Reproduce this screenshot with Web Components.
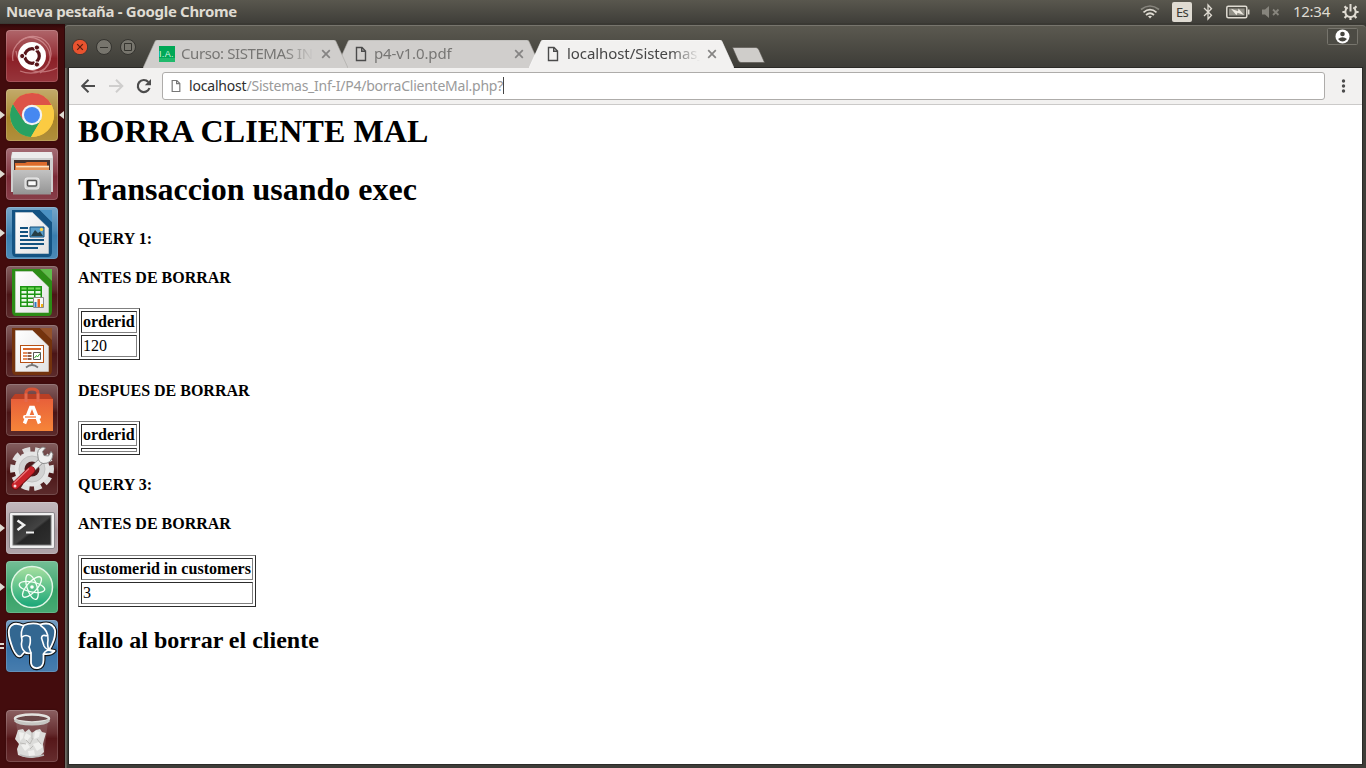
<!DOCTYPE html>
<html lang="es">
<head>
<meta charset="utf-8">
<title>Escritorio</title>
<style>
html,body{margin:0;height:100%;overflow:hidden;background:#430c0d}
</style>
</head>
<body>
<desk-top></desk-top>
<script>
const define = (name, html, setup) => customElements.define(name, class extends HTMLElement {
  connectedCallback() {
    if (this.shadowRoot) return;
    const t = document.createElement('template');
    t.innerHTML = typeof html === 'function' ? html(this) : html;
    this.attachShadow({mode: 'open'}).append(t.content.cloneNode(true));
    if (setup) setup(this);
  }
});

/* Text run tracked so that it fills a given width. */
define('fit-text', '<style>:host{display:inline-block;white-space:pre}span{display:inline-block}</style><span><slot></slot></span>', el => {
  const s = el.shadowRoot.querySelector('span');
  const n = el.textContent.length;
  const d = (+el.getAttribute('w') - s.getBoundingClientRect().width) / n;
  s.style.letterSpacing = d.toFixed(3) + 'px';
});

define('top-bar', `<style>
:host{display:flex;box-sizing:border-box;height:24px;align-items:center;padding:0 7px 0 6px;background:linear-gradient(#59574e,#3f3e39 95%,#37362f);color:#dfdbd2;font:15px/22px "Noto Sans",sans-serif}
.t{font-weight:700;flex:1;margin-top:-2px}
.l{width:20px;height:20px;border-radius:2px;background:#dfdbd2;color:#3c3b37;font-size:13px;line-height:21px;text-align:center;margin-left:12px}
.c{margin:-2px 0 0 13px}
svg{display:block;fill:none;stroke:#dfdbd2}
</style>
<fit-text class="t" w="231">Nueva pestaña - Google Chrome</fit-text>
<svg width="20" height="16" viewBox="0 0 20 16" stroke-width="1.7"><path d="M1 5.5Q10-1.5 19 5.5" stroke="#87857d"/><path d="M3.5 8.3Q10 3 16.5 8.3M6 11Q10 7.5 14 11"/><path d="M8 12.3Q10 11 12 12.3L10 14.6Z" fill="#dfdbd2" stroke="none"/></svg>
<div class="l"><fit-text w="12">Es</fit-text></div>
<svg style="margin-left:11px" width="10" height="18" viewBox="0 0 10 18" stroke-width="1.3"><path d="M1 5L8.5 12.3L5 16V2L8.5 5.7L1 13"/></svg>
<svg style="margin-left:13px" width="24" height="14" viewBox="0 0 24 14"><rect x=".8" y="1.3" width="20" height="11.4" rx="1.5" stroke-width="1.5"/><rect x="3" y="3.5" width="15.6" height="7" fill="#929087" stroke="none"/><path d="M22.7 4.5v5" stroke-width="1.6"/><path d="M5 3.7L12 6.3L12.5 3.5L18 10L11.500 7.700L10.500 10.200Z" fill="#eeeae1" stroke="none"/></svg>
<svg style="margin-left:12px" width="18" height="14" viewBox="0 0 18 14"><path d="M0 4.5H3L7 1V13L3 9.5H0Z" fill="#87857d" stroke="none"/><path d="M11 4.5L16.5 10M16.5 4.5L11 10" stroke="#87857d" stroke-width="1.8"/></svg>
<fit-text class="c" w="37">12:34</fit-text>
<svg style="margin-left:12px" width="17" height="18" viewBox="0 0 17 18"><path d="M5.7 4.5A5.2 5.2 0 1 0 11.3 4.5" stroke-width="2"/><path d="M8.5 1V8.5" stroke-width="2"/><path d="M8.5 14v3M3.6 9H.4M13.4 9h3.2M4.8 12.6L2.6 14.9M12.2 12.6L14.4 14.9M4.6 5.4L2.6 3.2M12.4 5.4L14.4 3.2" stroke-width="2.2"/></svg>`);

const doc = (c, d, body) => `<path d="M6 3H34L46 15V45Q46 50 42 50H10Q6 50 6 45Z" fill="${c}"/><path d="M34 3H46V15Z" fill="${d}"/><path d="M9.500 5.500H26.500L42.500 21V46.500H9.500Z" fill="url(#pp)" stroke="#ddd" stroke-width=".5"/>${body}`;
const elephant = 'M17 5.500Q7 1 3.500 8Q1 14 7 29Q11 38 15 36L18.500 32Q21 34 25 33V43Q26 49 32 48Q37.500 47 37.500 40V34Q45 35 48.500 31L43 30Q50 19 49 10Q46 1 34 4.500Q26 2 17 5.500Z';
const art = {
ubuntu: `<g fill="none" stroke="#efb9ba" stroke-width="1.300" opacity=".5"><path d="M7 31C4 15 20 2 35 8C49 15 48 33 34 43"/><path d="M13 12C25 1 43 12 44 26C45 39 30 47 14 41"/><path d="M10 21C12 39 32 47 51 38"/></g><circle cx="26" cy="26" r="14" fill="#fff"/><circle cx="26" cy="26" r="7.300" fill="none" stroke="#57151a" stroke-width="3.200"/><path d="M26 26L37 26M26 26L20.500 16.500M26 26L20.500 35.500" stroke="#fff" stroke-width="1.500" transform="rotate(60 26 26)"/><g fill="#57151a" stroke="#fff" stroke-width="1"><circle cx="16.200" cy="26" r="2.600"/><circle cx="30.900" cy="17.500" r="2.600"/><circle cx="30.900" cy="34.500" r="2.600"/></g>`,
chrome: `<circle cx="26" cy="26" r="22" fill="#fbcb42"/><path d="M7 15A22 22 0 0 0 25 48L35 31L26 26L17 30Z" fill="#28a162"/><path d="M26 16H45.500Q48 20 48 26A22 22 0 0 1 25 48L35 31Z" fill="#fbcb42"/><path d="M6.950 15L17 31L20 18L26 16H45.500A22 22 0 0 0 6.950 15Z" fill="#dd5347"/><circle cx="26" cy="26" r="10.200" fill="#f2f2f2"/><circle cx="26" cy="26" r="8" fill="#4688f1"/>`,
files: `<path d="M6 4H46L47 9V44H5V9Z" fill="#cfcfcf"/><path d="M6.500 4H45.500L46.500 10H5.500Z" fill="#ececec"/><path d="M8 12H44V25H8Z" fill="#43322e"/><path d="M9 15H19L21 14H41V24H9Z" fill="#dd6b2c"/><path d="M10 17.500H43V24H10Z" fill="#f0b27a"/><path d="M10 18.500H43" stroke="#fbe3c8"/><path d="M9 21H43" stroke="#e37b3a"/><path d="M7 22H45V46.500H7Z" fill="url(#sv)"/><rect x="19" y="30" width="14" height="11" rx="2" fill="#d4d4d4" stroke="#eee"/><rect x="21.500" y="32.500" width="9" height="5.500" rx="1" fill="#fafafa" stroke="#555" stroke-width="1.500"/>`,
writer: doc('#145382','#4a92c4','<path d="M14 21h8M14 25h8M14 29h8M14 33h24M14 37h24M14 41h18" stroke="#12527f" stroke-width="2"/><path d="M24 20H38V30H24Z" fill="#5a9fca" stroke="#13517c"/><path d="M25 29L29 23L32 26L34 24.500L37 29Z" fill="#263f45"/><circle cx="35.500" cy="22.500" r="1.700" fill="#ffd34a"/>'),
calc: doc('#2c8c16','#5fbd4b','<path d="M14 20H36V41H14Z" fill="#1d9413"/><path d="M15.500 21.500h5v2h-5zM22 21.500h6v2h-6zM29.500 21.500h5v2h-5z" fill="#71d957"/><g fill="#ecf9e9"><path d="M15.500 25h5v2.500h-5zM22 25h6v2.500h-6zM29.500 25h5v2.500h-5zM15.500 29h5v2.500h-5zM22 29h6v2.500h-6zM29.500 29h5v2.500h-5zM15.500 33h5v2.500h-5zM22 33h6v2.500h-6zM15.500 37h5v2.500h-5zM22 37h6v2.500h-6z"/></g><path d="M27.500 31.500H37.500V41.500H27.500Z" fill="#f7f7f7" stroke="#888"/><path d="M28.500 36h2v5h-2z" fill="#2c7bc0"/><path d="M31.500 33h2.500v8h-2.500z" fill="#e0651f"/><path d="M35 38h2v3h-2z" fill="#f3b312"/>'),
impress: doc('#74330d','#95522a','<rect x="14.500" y="20.500" width="23" height="17" fill="#fff" stroke="#b65115"/><path d="M17 24H35" stroke="#d9672a" stroke-width="2"/><path d="M17 28h4M17 31h4M17 34h4" stroke="#d9672a" stroke-width="1.700"/><path d="M21.500 28h4M21.500 31h4M21.500 34h4" stroke="#6d2a0c" stroke-width="1.700"/><path d="M27.500 27.500h7v7h-7z" fill="#fff" stroke="#555"/><path d="M28.500 33L30.500 30.500L31.500 32L34 28.500" fill="none" stroke="#36a32d"/><path d="M26 38V40M20 42.500Q26 37.500 32 42.500" stroke="#777" stroke-width="1.700" fill="none"/>'),
software: `<path d="M20 19V9Q20 5 26 5T32 9V19" fill="none" stroke="#d55335" stroke-width="3"/><path d="M5 15L9 10H43L47 15Z" fill="#b93f24"/><path d="M5 15H47V47H5Z" fill="url(#or)"/><path d="M20 18V9.500M32 18V9.500" stroke="#e3694c" stroke-width="3"/><g fill="none" stroke="#fff"><path d="M18.500 39.500L24.700 23.500H27.300L33.500 39.500" stroke-width="3.500"/></g><rect x="17" y="31" width="18" height="4" rx="2" fill="#fff"/><path d="M19 33H30" stroke="#f27434" stroke-width="1.200"/>`,
settings: `<circle cx="26" cy="26" r="19" fill="none" stroke="#dedede" stroke-width="6" stroke-dasharray="7.460 4.480" transform="rotate(-11 26 26)"/><circle cx="26" cy="26" r="17.500" fill="#e5e5e5"/><circle cx="26" cy="26" r="13" fill="#d2d2d2" stroke="#c2c2c2"/><circle cx="26" cy="26" r="7.500" fill="#4d1a1c"/><path d="M21 31L37 16" stroke="#8a8a8a" stroke-width="6"/><path d="M21 31L37 16" stroke="#ebebeb" stroke-width="4.600"/><path d="M37 4Q30 6 32 14Q32 19 37 20.500Q46 21 47 11L45 8.500L42.500 13L38 12.500L36.500 8.500L39.500 5Z" fill="#efefef" stroke="#858585" stroke-width=".900"/><path d="M9.500 42.500L25 27.500" stroke="#6f0d10" stroke-width="8.500" stroke-linecap="round"/><path d="M9.500 42.200L25 27.200" stroke="#c9232a" stroke-width="7" stroke-linecap="round"/><path d="M8 40L23 25.500" stroke="#ea777b" stroke-width="1.300"/><circle cx="9" cy="43" r="1.500" fill="#f7dcdc"/>`,
term: `<rect x="3.500" y="10.500" width="45" height="36" rx="1.500" fill="#f0f0f0" stroke="#8b878b"/><rect x="7" y="13.500" width="38" height="29.500" fill="url(#bk)" stroke="#767676"/><path d="M11.500 18.500L18 23L11.500 28" fill="none" stroke="#f1f1f1" stroke-width="2.500"/><path d="M20 30.500H28" stroke="#f1f1f1" stroke-width="2"/>`,
atom: `<circle cx="26" cy="26" r="20.500" fill="url(#at)" stroke="#e0f6e5" stroke-width="1.500"/><g fill="none" stroke="#f4fff6" stroke-width="1.300"><ellipse cx="26" cy="26" rx="13" ry="5" transform="rotate(12 26 26)"/><ellipse cx="26" cy="26" rx="13" ry="5" transform="rotate(72 26 26)"/><ellipse cx="26" cy="26" rx="13" ry="5" transform="rotate(132 26 26)"/></g><circle cx="26" cy="26" r="1.800" fill="#fff"/>`,
pg: `<g stroke-linejoin="round" fill="#336791"><path d="${elephant}" stroke="#111" stroke-width="4"/><path d="${elephant}" stroke="#fff" stroke-width="1.800"/></g><g fill="none" stroke="#fff" stroke-width="1.600"><path d="M18 5.500Q14 11 16 20Q14 28 19 32M16 17Q20 14 24 17Q25 23 23 27L25 33M34 5Q43 11 42 20Q41 26 43 30Q38 31 37.500 35M41 16Q36 14 35.500 18L38 26Q40 30 47 31"/></g>`,
trash: `<path d="M10 11L14 45Q26 50 38 45L42 11Z" fill="#8d6567" opacity=".5"/><path d="M12 20l5-1 2 3 4-3 3 4 4-3 4-1 2 3 4 1-2 7-1 4 1 8-4 4-8 2-8-1-6-2-1-6 2-5-4-5z" fill="#dcdcda"/><path d="M13 22l5 1-1 5-3 3zM20 23l5 3-4 5-3-3zM29 21l5 1-1 5-5 2zM15 35l6-2 3 4-5 4zM27 34l6-2 4 5-6 4zM22 41l6-1 1 5-6 1z" fill="#f0f0ee"/><path d="M20 30l4 4 3-6M31 29l4 5M24 39l3-3M26 22v7M14 33l6 1" stroke="#bcbbb8" fill="none"/><path d="M14 45Q26 49 38 45" fill="none" stroke="#bbb" stroke-width="1.500"/><ellipse cx="26" cy="8.500" rx="17" ry="4" fill="#6a4748" stroke="#e2e2df" stroke-width="2.500"/><path d="M9 10Q12 14 26 14T43 10" fill="none" stroke="#c6c6c2" stroke-width="3"/>`
};
const defs = `<defs><linearGradient id="sv" x2="0" y2="1"><stop stop-color="#c2c2c2"/><stop offset="1" stop-color="#949494"/></linearGradient><linearGradient id="pp" x2="1" y2="1"><stop stop-color="#fff"/><stop offset="1" stop-color="#e2e2e2"/></linearGradient><linearGradient id="or" x2="0" y2="1"><stop stop-color="#e8603a"/><stop offset="1" stop-color="#f68539"/></linearGradient><linearGradient id="bk" x2="1" y2="1"><stop stop-color="#262626"/><stop offset=".5" stop-color="#434343"/><stop offset=".55" stop-color="#262626"/><stop offset="1" stop-color="#303030"/></linearGradient><linearGradient id="at" x2="0" y2="1"><stop stop-color="#a9e0a0"/><stop offset="1" stop-color="#18a678"/></linearGradient></defs>`;

define('launcher-tile', el => `<style>
:host{display:block;position:relative;width:52px;height:52px;border-radius:4px;background:linear-gradient(#ffffff50,#ffffff18 45%,#ffffff00 55%,#ffffff18),${el.getAttribute('tint')};box-shadow:inset 0 0 0 1px #ffffff28,0 0 2px #0004}
svg{display:block}
i{position:absolute;top:22px;border:4px solid transparent}
.r{left:-6px;border-left:5px solid #dfdbd2;border-right:0}
.a{left:53px;border-right:5px solid #dfdbd2;border-left:0}
.d{left:-6px;top:23px;width:4px;height:2px;border:solid #dfdbd2;border-width:2px 0}
</style><svg width="52" height="52" viewBox="0 0 52 52">${defs}${art[el.getAttribute('icon')]}</svg>${[...(el.getAttribute('run') || '')].map(c => `<i class="${c}"></i>`).join('')}`);

define('app-launcher', `<style>
:host{display:flex;flex-direction:column;gap:7px;box-sizing:border-box;width:65px;padding:6px 0 6px 6px;background:linear-gradient(#2d0809,#430c0d 5px);box-shadow:inset -1px 0 #2d090a}
.e{margin-top:auto}
</style>
<launcher-tile icon="ubuntu" tint="#8c2027"></launcher-tile>
<launcher-tile icon="chrome" tint="#a88428" run="ra"></launcher-tile>
<launcher-tile icon="files" tint="#7b2a36" run="r"></launcher-tile>
<launcher-tile icon="writer" tint="#397eaf" run="r"></launcher-tile>
<launcher-tile icon="calc" tint="#4b1516"></launcher-tile>
<launcher-tile icon="impress" tint="#4b1516"></launcher-tile>
<launcher-tile icon="software" tint="#4b1516"></launcher-tile>
<launcher-tile icon="settings" tint="#4b1516"></launcher-tile>
<launcher-tile icon="term" tint="#a7999f" run="r"></launcher-tile>
<launcher-tile icon="atom" tint="#35a166" run="r"></launcher-tile>
<launcher-tile icon="pg" tint="#3570a6" run="d"></launcher-tile>
<launcher-tile class="e" icon="trash" tint="#561719"></launcher-tile>`);

define('page-icon', '<style>:host{display:block;flex:none}svg{display:block}</style><svg width="12" height="16" viewBox="0 0 12 16" fill="none" stroke="currentColor" stroke-width="1.400"><path d="M1.500 1.500H7L10.500 5V14.500H1.500ZM6.700 1.500V5.300H10.500"/></svg>');

define('browser-tab', el => {
  const on = el.hasAttribute('active');
  return `<style>
:host{display:block;position:relative;width:205px;height:28px;margin-right:-12px;z-index:${el.getAttribute('z')};flex:none;color:${on ? '#464646' : '#777674'};font:15px/28px "Noto Sans",sans-serif}
.bg{position:absolute;inset:0}
.row{position:relative;display:flex;align-items:center;height:28px;padding-left:${el.getAttribute('pad')}px}
.tx{flex:none;width:133px;height:28px;line-height:27px;margin-left:${on ? 7 : 6}px;overflow:hidden;-webkit-mask-image:linear-gradient(90deg,#000 103px,transparent 133px);white-space:pre}
.x{margin-left:${on ? 7 : 7}px;flex:none}
page-icon{color:#4b4b4b;margin:0 1px}
</style><svg class="bg" width="205" height="28"><path d="M0 28L12 1.500Q12.500 0 14 0H191Q192.500 0 193 1.500L205 28Z" fill="${on ? '#f2f1f0' : '#d0cecc'}"/><path d="M0 28L12 1.500Q12.500 0 14 0H191Q192.500 0 193 1.500L205 28" fill="none" stroke="${on ? '#fff' : '#a9a7a4'}" stroke-opacity=".6"/></svg>
<div class="row"><slot name="icon"><page-icon></page-icon></slot><div class="tx"><slot></slot></div><svg class="x" width="10" height="10" stroke="#858483" stroke-width="1.700"><path d="M1.200 1.200L8.800 8.800M8.800 1.200L1.200 8.800"/></svg></div>`;
});

define('site-icon', '<style>:host{display:block;width:16px;height:16px;overflow:hidden;background:linear-gradient(#00a856 12px,#20b96b 12px);color:#d7f7e2;font:9px/17px "Liberation Sans",sans-serif;flex:none}</style><fit-text w="15">I.A.</fit-text>');

define('title-strip', `<style>
:host{display:flex;box-sizing:border-box;height:43px;padding:14px 4px 0 7px;background:linear-gradient(#5b5950,#3e3d38 95%);border-top:1px solid #77756d;border-radius:4px 4px 0 0;align-items:flex-start}
.b{display:flex;gap:8px;margin:-1px 7px 0 0}
.n{margin:7px 0 0 10px}
svg{display:block;flex:none}
.u{margin:-12px 4px 0 auto}
</style>
<div class="b"><svg width="16" height="16"><circle cx="8" cy="8" r="7.700" fill="#e9532f" stroke="#3a3934"/><path d="M5.200 5.200L10.800 10.800M10.800 5.200L5.200 10.800" stroke="#591c0f" stroke-width="1.200"/></svg>
<svg width="16" height="16"><circle cx="8" cy="8" r="7.500" fill="#77756d" stroke="#34332f"/><path d="M4 8.500H12" stroke="#35342f"/></svg>
<svg width="16" height="16"><circle cx="8" cy="8" r="7.500" fill="#77756d" stroke="#34332f"/><path d="M4.500 4.500H11.500V11.500H4.500Z" stroke="#35342f" fill="none"/></svg></div>
<browser-tab z="1" pad="16"><site-icon slot="icon"></site-icon><fit-text w="139">Curso: SISTEMAS INF</fit-text></browser-tab>
<browser-tab z="0" pad="18"><fit-text w="77.500">p4-v1.0.pdf</fit-text></browser-tab>
<browser-tab z="2" pad="17" active><fit-text w="137">localhost/Sistemas_</fit-text></browser-tab>
<svg class="n" width="34" height="16"><path d="M.500.500H24Q26 .500 27 3L32.500 15.500H9Q7 15.500 6 13Z" fill="#cfcdca" stroke="#55534d" stroke-width=".600"/></svg>
<svg class="u" width="31" height="17"><rect x=".500" y=".500" width="30" height="16" rx="1" fill="#4c4b44" stroke="#77756d"/><circle cx="15.500" cy="8.500" r="7" fill="#fff"/><circle cx="15.500" cy="6" r="2.300" fill="#45443e"/><path d="M11 11Q15.500 7.500 20 11Q15.500 16 11 11Z" fill="#45443e"/></svg>`);

define('address-row', `<style>
:host{display:flex;box-sizing:border-box;height:37px;align-items:center;padding:0 14px 1px 11px;background:#f2f1f0;border-bottom:1px solid #cbcac9;font:14px/26px "Noto Sans",sans-serif}
svg{display:block;flex:none}
.o{flex:1;display:flex;align-items:center;box-sizing:border-box;height:28px;margin:0 14px 0 6px;padding-left:7px;border:1px solid #aeacaa;border-radius:3px;background:#fff;color:#9a9a9a}
.o page-icon{color:#777;transform:scale(.85)}
.h{color:#2e2e2e;margin-left:7px}
.c{width:1px;height:17px;background:#444}
</style>
<svg width="76" height="16" fill="none" stroke-width="2"><path d="M15 8H2.500M8.500 1.800L2.200 8L8.500 14.200" stroke="#4c4c4c"/><path d="M29 8H42M36 1.800L42.300 8L36 14.200" stroke="#cfcecd"/><path d="M69.500 10A6 6 0 1 1 68.300 4" stroke="#4c4c4c" stroke-width="2.200"/><path d="M71 1V7.200H64.800Z" fill="#4c4c4c"/></svg>
<div class="o"><page-icon></page-icon><fit-text class="h" w="57.500">localhost</fit-text><fit-text w="256.500">/Sistemas_Inf-I/P4/borraClienteMal.php?</fit-text><span class="c"></span></div>
<svg width="9" height="14" fill="#4c4c4c"><circle cx="4.500" cy="2" r="1.700"/><circle cx="4.500" cy="7" r="1.700"/><circle cx="4.500" cy="12" r="1.700"/></svg>`);

define('result-table', el => `<style>
:host{display:block}
table{border:1px solid;border-color:#808080 #2c2c2c #2c2c2c #808080;border-spacing:2px}
th,td{border:1px solid;border-color:#2c2c2c #808080 #808080 #2c2c2c;padding:1px;text-align:left}
</style><table><tr><th>${el.getAttribute('head')}</th></tr><tr><td>${el.getAttribute('value') || ''}</td></tr></table>`);

define('web-page', `<style>
:host{display:block;box-sizing:border-box;flex:1;padding:8px 8px 8px 9px;background:#fff;color:#000;font:16px "Liberation Serif",serif}
h1:first-of-type{margin-top:0;letter-spacing:.12px}
.w{letter-spacing:.04px}
</style>
<h1>BORRA CLIENTE MAL</h1><h1>Transaccion usando exec</h1>
<h4>QUERY 1:</h4><h4>ANTES DE BORRAR</h4><result-table head="orderid" value="120"></result-table>
<h4>DESPUES DE BORRAR</h4><result-table head="orderid"></result-table>
<h4>QUERY 3:</h4><h4>ANTES DE BORRAR</h4><result-table class="w" head="customerid in customers" value="3"></result-table>
<h2>fallo al borrar el cliente</h2>`);

define('browser-window', `<style>
:host{display:flex;flex-direction:column;flex:1;min-width:0;margin-top:1px;background:#3e3d38;box-shadow:inset 1px 0 #6c6a62,inset 2px 0 #5c5a52;border-radius:4px 4px 0 0}
.in{flex:1;display:flex;flex-direction:column;margin:0 4px 4px 4px;box-shadow:0 0 0 1px #2b2a27}
</style><title-strip></title-strip><div class="in"><address-row></address-row><web-page></web-page></div>`);

define('desk-top', `<style>
:host{display:flex;flex-direction:column;width:1366px;height:768px;background:#3a3934}
.m{flex:1;display:flex;min-height:0}
</style><top-bar></top-bar><div class="m"><app-launcher></app-launcher><browser-window></browser-window></div>`);
</script>
</body>
</html>
